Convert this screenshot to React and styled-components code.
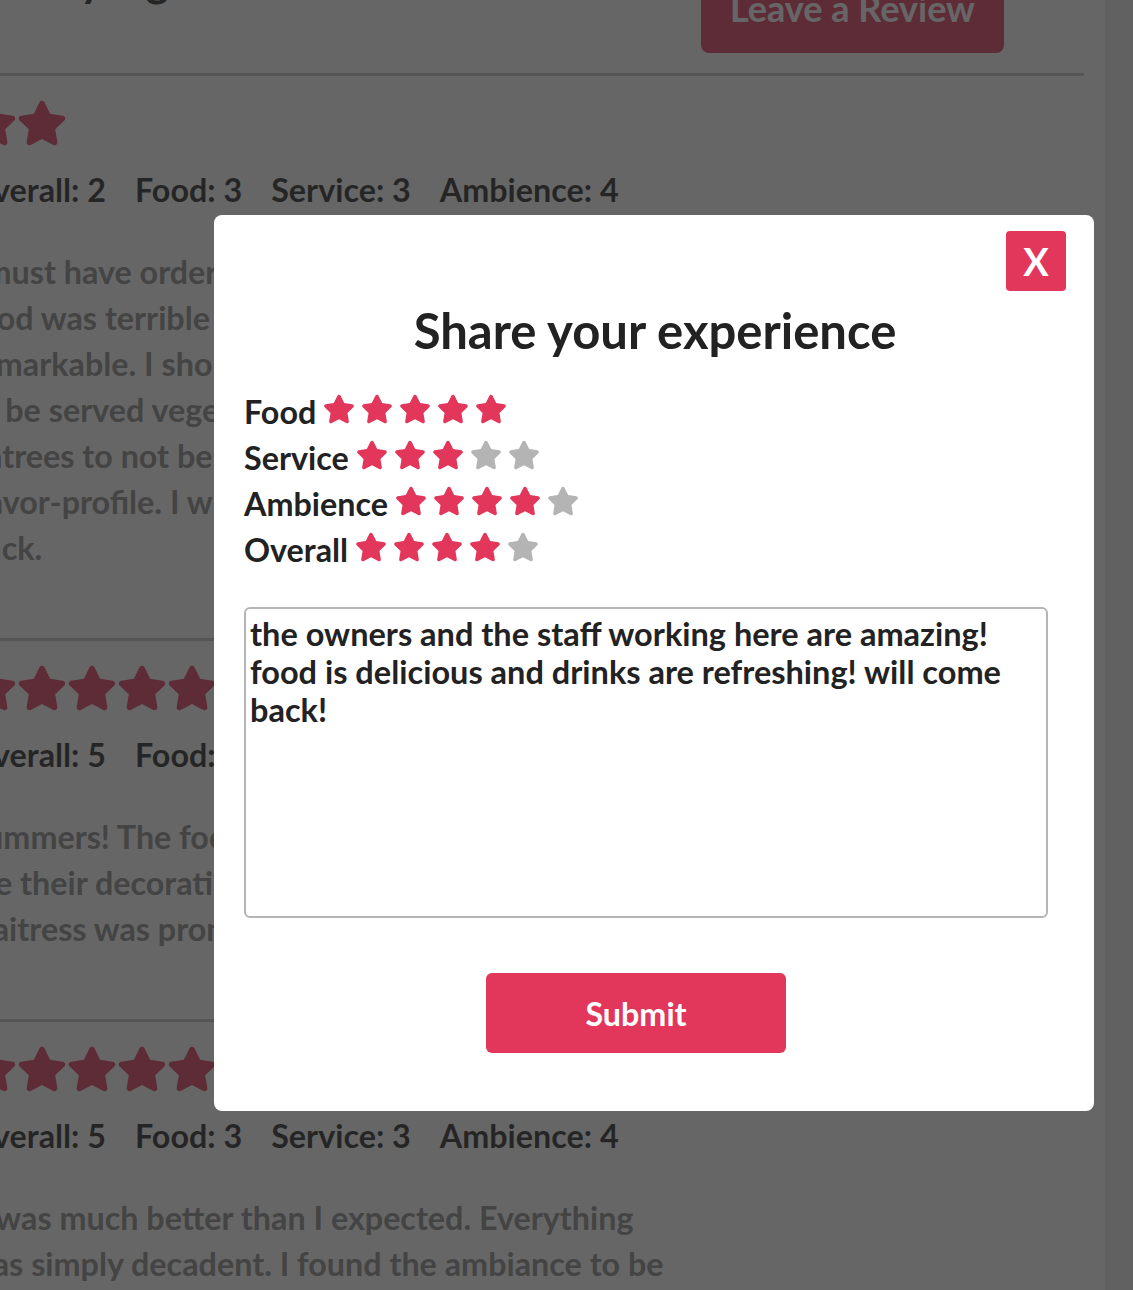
import React, { useState } from "react";
import styled, { createGlobalStyle } from "styled-components";
import { FaStar } from "react-icons/fa";

const accent = "#e2365a";

const GlobalStyle = createGlobalStyle`
  html, body {
    margin: 0;
    padding: 0;
    overflow: hidden;
    background: #fff;
  }
  body {
    font-family: "Lato", "Open Sans", sans-serif;
    color: #222;
  }
`;

const reviews = [
  {
    id: 1,
    overall: 2,
    food: 3,
    service: 3,
    ambience: 4,
    text:
      "I must have ordered the wrong dish since the food was terrible and the service was nothing remarkable. I should never have to wait one hour to be served vegetables and expect the main entrees to not be overcooked and lacking any flavor-profile. I will not recommend it or come back.",
  },
  {
    id: 2,
    overall: 5,
    food: 5,
    service: 5,
    ambience: 5,
    text:
      "Yummers! The food here is truly amazing, and so are their decorations and the atmosphere. Our waitress was prompt and very friendly too.",
  },
  {
    id: 3,
    overall: 5,
    food: 3,
    service: 3,
    ambience: 4,
    text:
      "It was much better than I expected. Everything was simply decadent. I found the ambiance to be warm and welcoming for the whole family.",
  },
];

const Page = styled.div`
  display: flex;
  width: 100vw;
  height: 100vh;
  overflow: hidden;
`;

const Main = styled.main`
  flex: 1;
  margin: -120px 0 0 -33px;
  padding-right: 21px;
`;

const ScrollTrack = styled.div`
  width: 28px;
  flex-shrink: 0;
  background: #eeeeee;
`;

const Header = styled.header`
  display: flex;
  justify-content: space-between;
  align-items: flex-start;
  padding: 71px 80px 20px 0;
  border-bottom: 3px solid #c3c3c3;
`;

const PageTitle = styled.h1`
  margin: 0;
  font-size: 44px;
  line-height: 58px;
  font-weight: 700;
  color: #222;
`;

const LeaveButton = styled.button`
  margin-top: 12px;
  height: 90px;
  padding: 0 29px;
  border: none;
  border-radius: 8px;
  background: ${accent};
  color: #fff;
  font-family: inherit;
  font-size: 36px;
  font-weight: 700;
`;

const Review = styled.article`
  padding: 22px 0 67px;
  border-bottom: 3px solid #c3c3c3;
`;

const StarRow = styled.div`
  display: flex;
  gap: ${(p) => p.$gap || 0}px;
  color: ${accent};

  svg {
    display: block;
  }
`;

const Meta = styled.div`
  display: flex;
  gap: 29px;
  margin-top: 22px;
  font-size: 32.3px;
  line-height: 40px;
  font-weight: 700;
  color: #1f1f1f;
`;

const Body = styled.p`
  max-width: 705px;
  margin: 39px 0 0;
  font-size: 32.3px;
  line-height: 46px;
  font-weight: 700;
  color: #888;
`;

const Overlay = styled.div`
  position: fixed;
  inset: 0;
  display: flex;
  align-items: flex-start;
  padding: 215px 0 0 214px;
  background: rgba(41, 41, 41, 0.714);
`;

const Modal = styled.form`
  width: 880px;
  box-sizing: border-box;
  display: flex;
  flex-direction: column;
  padding: 16px 28px 58px 30px;
  background: #fff;
  border-radius: 8px;
`;

const CloseRow = styled.div`
  display: flex;
  justify-content: flex-end;
`;

const CloseButton = styled.button`
  width: 60px;
  height: 60px;
  border: none;
  border-radius: 4px;
  background: ${accent};
  color: #fff;
  font-family: inherit;
  font-size: 38px;
  font-weight: 700;
  line-height: 1;
  padding: 0;
`;

const ModalTitle = styled.h2`
  margin: 9px 0 0;
  text-align: center;
  font-size: 49px;
  line-height: 60px;
  font-weight: 700;
  color: #222;
`;

const RatingList = styled.div`
  margin-top: 26px;
  display: flex;
  flex-direction: column;
`;

const RatingRow = styled.div`
  display: flex;
  align-items: center;
  gap: 7px;
  height: 46px;
`;

const RatingLabel = styled.span`
  font-size: 32.3px;
  font-weight: 700;
  color: #222;
  padding-top: 5px;
`;

const PickStar = styled.span`
  display: flex;
  color: ${(p) => (p.$on ? accent : "#b4b4b4")};
  cursor: pointer;

  svg {
    display: block;
  }
`;

const TextArea = styled.textarea`
  margin-top: 37px;
  width: 804px;
  height: 311px;
  box-sizing: border-box;
  padding: 6px 4px;
  border: 2px solid #b5b5b5;
  border-radius: 6px;
  resize: none;
  font-family: inherit;
  font-size: 32.5px;
  line-height: 38px;
  font-weight: 700;
  color: #222;
  outline: none;
`;

const SubmitButton = styled.button`
  margin: 55px 0 0 242px;
  width: 300px;
  height: 80px;
  border: none;
  border-radius: 6px;
  background: ${accent};
  color: #fff;
  font-family: inherit;
  font-size: 32.3px;
  font-weight: 700;
`;

const Stars = ({ count, size, gap }) => (
  <StarRow $gap={gap}>
    {Array.from({ length: count }, (_, i) => (
      <FaStar key={i} size={size} />
    ))}
  </StarRow>
);

const StarPicker = ({ label, value, onChange }) => (
  <RatingRow>
    <RatingLabel>{label}</RatingLabel>
    <StarRow $gap={6}>
      {[1, 2, 3, 4, 5].map((n) => (
        <PickStar key={n} $on={n <= value} onClick={() => onChange(n)}>
          <FaStar size={32} />
        </PickStar>
      ))}
    </StarRow>
  </RatingRow>
);

const App = () => {
  const [ratings, setRatings] = useState({
    Food: 5,
    Service: 3,
    Ambience: 4,
    Overall: 4,
  });
  const [comment, setComment] = useState(
    "the owners and the staff working here are amazing! food is delicious and drinks are refreshing! will come back!"
  );

  return (
    <>
      <GlobalStyle />
      <Page>
        <Main>
          <Header>
            <PageTitle>Mostly a good time</PageTitle>
            <LeaveButton>Leave a Review</LeaveButton>
          </Header>

          {reviews.map((r) => (
            <Review key={r.id}>
              <Stars count={r.overall} size={50} />
              <Meta>
                <span>Overall: {r.overall}</span>
                <span>Food: {r.food}</span>
                <span>Service: {r.service}</span>
                <span>Ambience: {r.ambience}</span>
              </Meta>
              <Body>{r.text}</Body>
            </Review>
          ))}
        </Main>
        <ScrollTrack />
      </Page>

      <Overlay>
        <Modal onSubmit={(e) => e.preventDefault()}>
          <CloseRow>
            <CloseButton type="button">X</CloseButton>
          </CloseRow>
          <ModalTitle>Share your experience</ModalTitle>
          <RatingList>
            {Object.keys(ratings).map((key) => (
              <StarPicker
                key={key}
                label={key}
                value={ratings[key]}
                onChange={(n) => setRatings({ ...ratings, [key]: n })}
              />
            ))}
          </RatingList>
          <TextArea
            value={comment}
            onChange={(e) => setComment(e.target.value)}
          />
          <SubmitButton type="submit">Submit</SubmitButton>
        </Modal>
      </Overlay>
    </>
  );
};

export default App;
